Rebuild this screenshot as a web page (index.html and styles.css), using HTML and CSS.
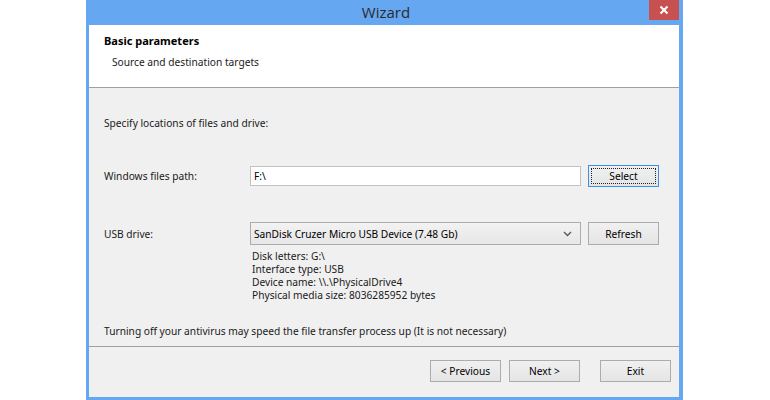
FILE: index.html
```html
<!DOCTYPE html>
<html>
<head>
<meta charset="utf-8">
<link rel="stylesheet" href="styles.css">
</head>
<body>
<div class="window">
  <div class="titlebar">
    <span class="title">Wizard</span>
    <div class="close"><svg width="10" height="10" viewBox="0 0 10 10"><path d="M1.5 1.5 L8.5 8.5 M8.5 1.5 L1.5 8.5" stroke="#fff" stroke-width="2"/></svg></div>
  </div>
  <div class="client">
    <div class="header">
      <div class="h-title">Basic parameters</div>
      <div class="h-sub">Source and destination targets</div>
    </div>
    <div class="content">
      <div class="intro">Specify locations of files and drive:</div>
      <div class="row row-path">
        <div class="label">Windows files path:</div>
        <div class="input">F:\</div>
        <div class="btn focused"><span class="focus-rect">Select</span></div>
      </div>
      <div class="row row-usb">
        <div class="label">USB drive:</div>
        <div class="combo"><span>SanDisk Cruzer Micro USB Device (7.48 Gb)</span><svg class="chev" width="9" height="6" viewBox="0 0 9 6"><path d="M1 1 L4.5 4.5 L8 1" fill="none" stroke="#555" stroke-width="1.3"/></svg></div>
        <div class="btn">Refresh</div>
      </div>
      <div class="info">
        <div>Disk letters: G:\</div>
        <div>Interface type: USB</div>
        <div>Device name: \\.\PhysicalDrive4</div>
        <div>Physical media size: 8036285952 bytes</div>
      </div>
      <div class="note">Turning off your antivirus may speed the file transfer process up (It is not necessary)</div>
    </div>
    <div class="footer">
      <div class="btn">&lt; Previous</div>
      <div class="btn">Next &gt;</div>
      <div class="btn exit">Exit</div>
    </div>
  </div>
</div>
</body>
</html>
```

FILE: styles.css
```css
html, body {
  margin: 0;
  padding: 0;
  background: #ffffff;
  width: 770px;
  height: 400px;
  overflow: hidden;
}
body {
  font-family: "Noto Sans", "DejaVu Sans", sans-serif;
  font-size: 10.2px;
  color: #1a1a1a;
}
.window {
  margin-left: 86px;
  width: 590px;
  background: #66a7f1;
  border-left: 3px solid #66a7f1;
  border-right: 4px solid #66a7f1;
  border-bottom: 3px solid #66a7f1;
}
.titlebar {
  height: 25px;
  position: relative;
  display: flex;
  align-items: center;
  justify-content: center;
}
.title {
  font-family: "Open Sans", "Noto Sans", sans-serif;
  font-size: 15px;
  color: #2b2b2b;
  margin-left: 4px;
  margin-top: -2px;
}
.close {
  position: absolute;
  right: 0;
  top: 0;
  width: 30px;
  height: 20px;
  background: #c75050;
  display: flex;
  align-items: center;
  justify-content: center;
}
.client {
  background: #f0f0f0;
  height: 372px;
  display: flex;
  flex-direction: column;
}
.header {
  background: #ffffff;
  height: 63px;
  border-bottom: 1px solid #a0a0a0;
  box-sizing: border-box;
  padding: 8px 0 0 15px;
}
.h-title {
  font-weight: bold;
  font-size: 11px;
  color: #000;
  line-height: 16px;
}
.h-sub {
  margin-top: 6px;
  padding-left: 8px;
  line-height: 14px;
}
.content {
  padding: 27px 20px 0 15px;
  height: 259px;
  box-sizing: border-box;
  border-bottom: 1px solid #a0a0a0;
}
.intro {
  line-height: 16px;
}
.row {
  display: flex;
  align-items: center;
}
.row-path {
  margin-top: 34px;
}
.row-usb {
  margin-top: 35px;
}
.label {
  width: 146px;
  line-height: 16px;
}
.input {
  width: 331px;
  height: 20px;
  box-sizing: border-box;
  border: 1px solid #c2c2c2;
  background: #fff;
  padding: 1px 0 0 3px;
  line-height: 16px;
  color: #000;
}
.combo {
  width: 331px;
  height: 23px;
  box-sizing: border-box;
  border: 1px solid #acacac;
  background: linear-gradient(#f2f2f2, #e7e7e7);
  padding: 0 8px 0 3px;
  display: flex;
  align-items: center;
  justify-content: space-between;
  color: #000;
}
.btn {
  width: 71px;
  height: 22px;
  box-sizing: border-box;
  border: 1px solid #acacac;
  background: linear-gradient(#f0f0f0, #e5e5e5);
  display: flex;
  align-items: center;
  justify-content: center;
  color: #000;
  margin-left: 7px;
}
.row-usb .btn {
  height: 23px;
}
.btn.focused {
  border-color: #3c8fe6;
  padding: 2px;
}
.focus-rect {
  flex: 1;
  align-self: stretch;
  border: 1px dotted #222;
  display: flex;
  align-items: center;
  justify-content: center;
}
.info {
  margin-left: 148px;
  margin-top: 5px;
  line-height: 13px;
}
.note {
  margin-top: 21px;
  line-height: 16px;
}
.footer {
  display: flex;
  justify-content: flex-end;
  padding: 13px 8px 0 0;
}
.footer .btn {
  margin-left: 8px;
}
.footer .btn.exit {
  margin-left: 20px;
}
```
